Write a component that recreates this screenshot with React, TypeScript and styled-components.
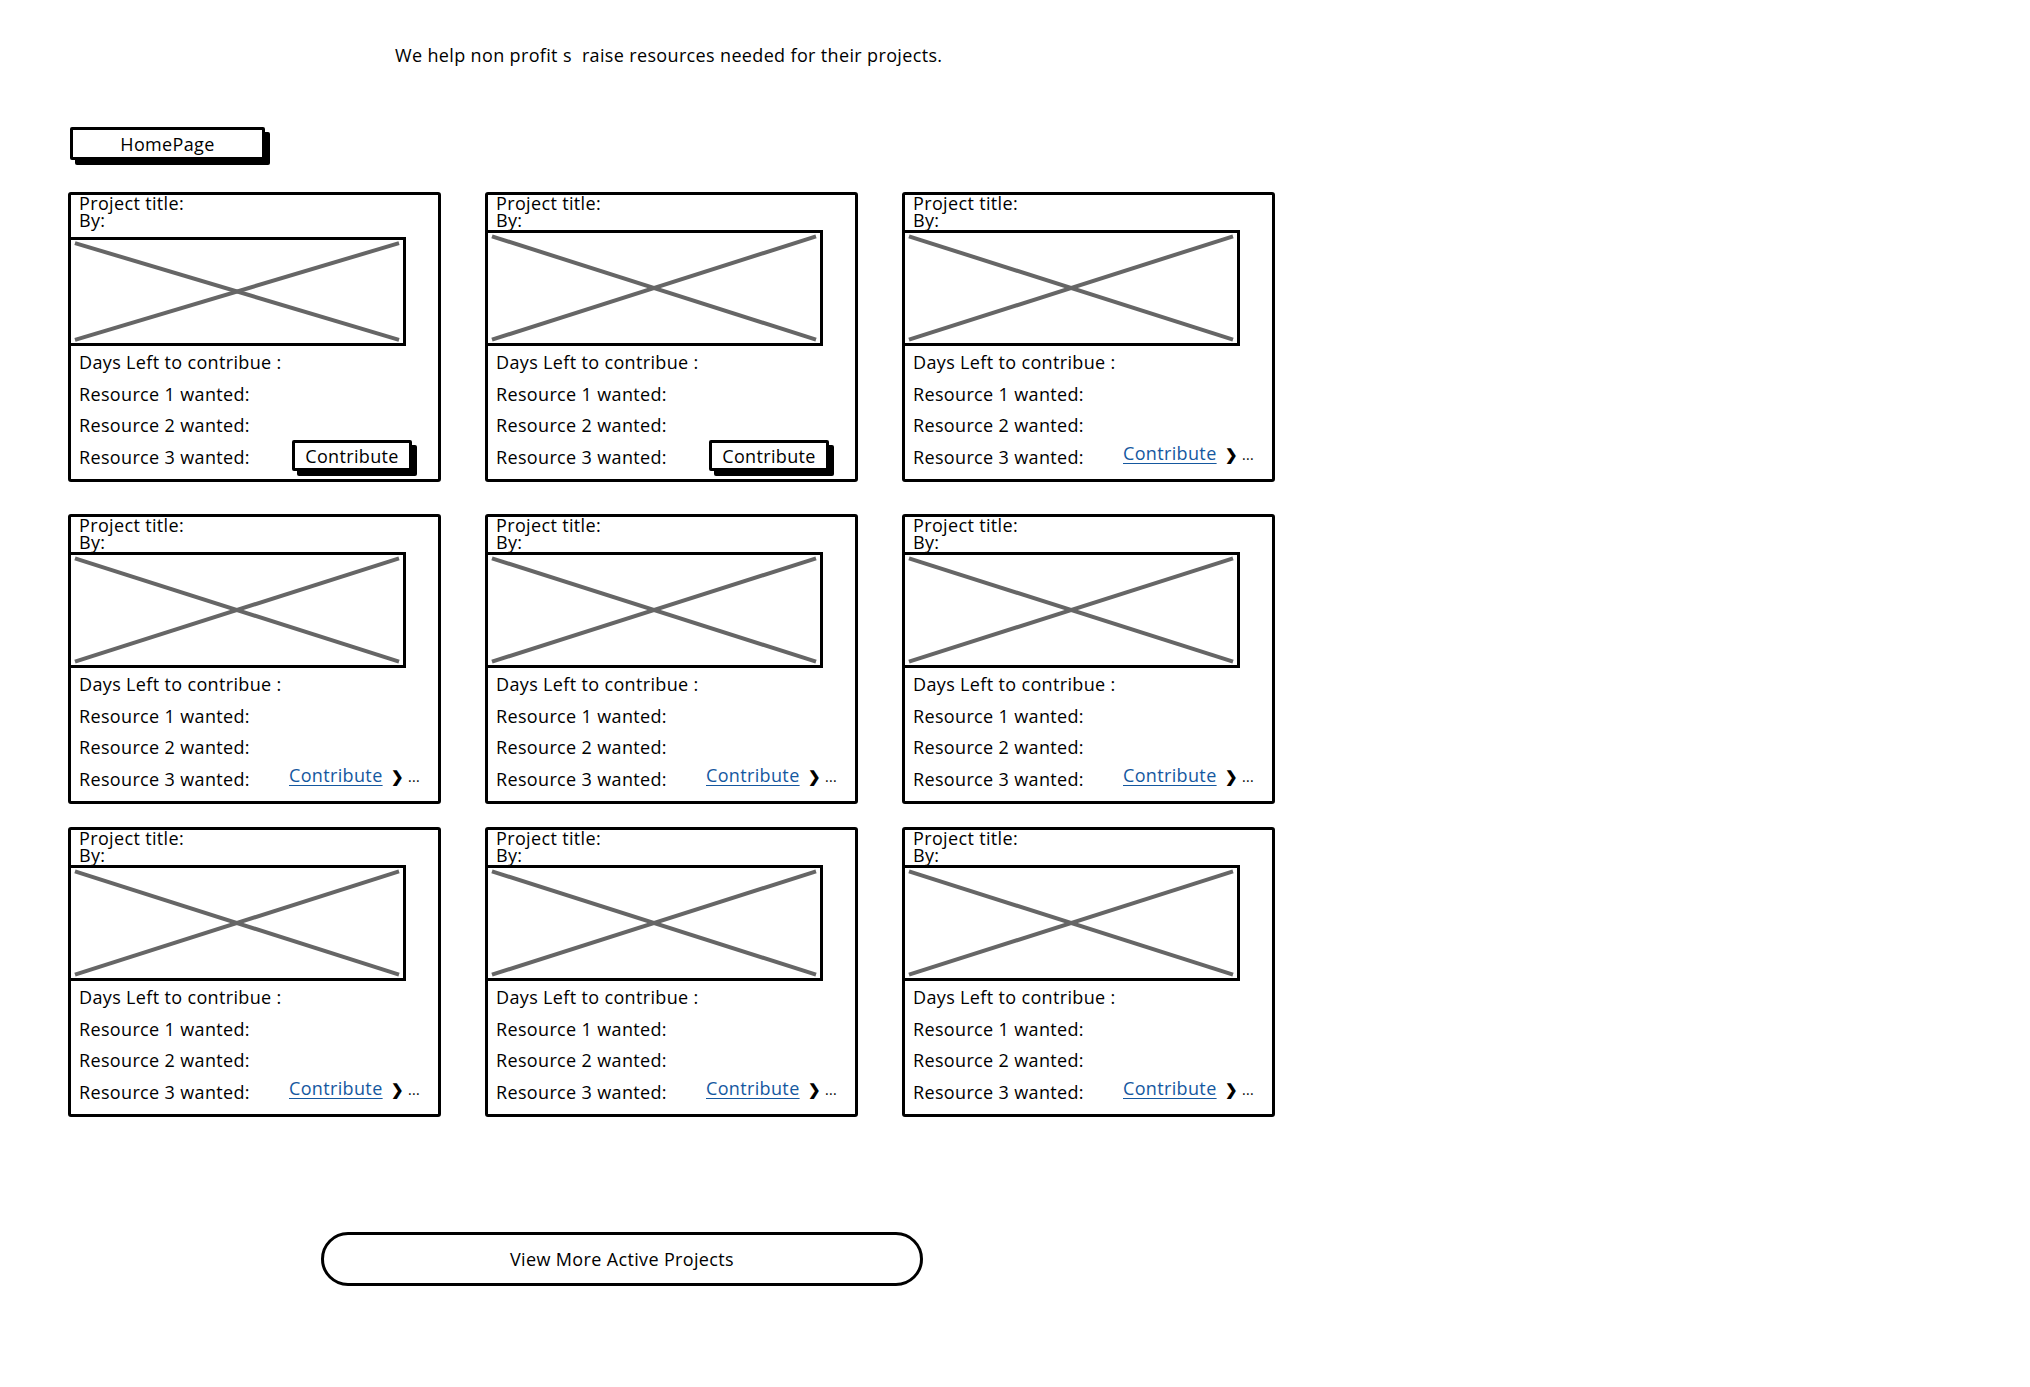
import styled, { createGlobalStyle } from "styled-components";

const GlobalStyle = createGlobalStyle`
  body {
    margin: 0;
    background: #fff;
    color: #000;
    font-family: "Open Sans", "Noto Sans", sans-serif;
    letter-spacing: 0.35px;
  }
`;

const Page = styled.div`
  padding: 43px 0 80px 68px;
  width: 1962px;
  min-height: 1263px;
`;

const Tagline = styled.div`
  margin-left: 327px;
  font-size: 18px;
  line-height: 24px;
`;

const HomeButton = styled.button`
  display: block;
  margin-top: 60px;
  margin-left: 2px;
  width: 195px;
  height: 33px;
  border: 3px solid #000;
  border-radius: 2px;
  background: #fff;
  box-shadow: 5px 5px 0 #000;
  font-family: inherit;
  font-size: 18px;
  line-height: 22px;
  letter-spacing: inherit;
  color: #000;
  padding: 0;
`;

const Grid = styled.div`
  display: grid;
  grid-template-columns: repeat(3, 373px);
  grid-template-rows: 322px 313px 290px;
  column-gap: 44px;
  align-items: start;
  margin-top: 32px;
`;

const Card = styled.div`
  border: 3px solid #000;
  border-radius: 3px;
  height: 290px;
  box-sizing: border-box;
  display: flex;
  flex-direction: column;
`;

const CardHead = styled.div<{ $tall?: boolean }>`
  padding-left: 8px;
  font-size: 18px;
  line-height: 17px;
  height: ${(p) => (p.$tall ? "42px" : "35px")};
`;

const Placeholder = styled.div<{ $tall?: boolean }>`
  margin-left: -3px;
  width: 338px;
  height: ${(p) => (p.$tall ? "109px" : "116px")};
  border: 3px solid #000;
  box-sizing: border-box;
  background: #fff;

  svg {
    display: block;
    width: 100%;
    height: 100%;
  }
`;

const Details = styled.div`
  padding-left: 8px;
  padding-top: 1px;
  font-size: 18px;
  line-height: 31.5px;
`;

const LastRow = styled.div`
  display: flex;
  align-items: center;
`;

const RowLabel = styled.span`
  width: 213px;
  flex: none;
`;

const ContributeButton = styled.button`
  box-sizing: content-box;
  width: 114px;
  height: 25px;
  margin-top: -3px;
  border: 3px solid #000;
  border-radius: 2px;
  background: #fff;
  box-shadow: 5px 5px 0 #000;
  font-family: inherit;
  font-size: 18px;
  line-height: 22px;
  letter-spacing: inherit;
  color: #000;
  padding: 0;
`;

const LinkWrap = styled.span`
  display: flex;
  align-items: baseline;
  margin-left: -3px;
  margin-top: -6px;
`;

const ContributeLink = styled.a`
  color: #15589f;
  text-decoration: underline;
  text-underline-offset: 3px;
  font-size: 18px;
  cursor: pointer;
`;

const Chevron = styled.span`
  font-size: 15px;
  font-weight: 900;
  margin-left: 8px;
`;

const Dots = styled.span`
  font-size: 14px;
  margin-left: 4px;
`;

const Footer = styled.div`
  margin-top: 115px;
  margin-left: 253px;
`;

const MoreButton = styled.button`
  width: 602px;
  height: 54px;
  border: 3px solid #000;
  border-radius: 27px;
  background: #fff;
  font-family: inherit;
  font-size: 18px;
  letter-spacing: inherit;
  color: #000;
  padding: 0;
`;

const CrossedImage = ({ tall }: { tall?: boolean }) => (
  <Placeholder $tall={tall}>
    <svg viewBox="0 0 100 100" preserveAspectRatio="none">
      <line
        x1="1.2"
        y1="3"
        x2="98.8"
        y2="97"
        stroke="#666"
        strokeWidth="4"
        vectorEffect="non-scaling-stroke"
      />
      <line
        x1="1.2"
        y1="97"
        x2="98.8"
        y2="3"
        stroke="#666"
        strokeWidth="4"
        vectorEffect="non-scaling-stroke"
      />
    </svg>
  </Placeholder>
);

type Project = { mode: "button" | "link"; tall?: boolean };

const projects: Project[] = [
  { mode: "button", tall: true },
  { mode: "button" },
  { mode: "link" },
  { mode: "link" },
  { mode: "link" },
  { mode: "link" },
  { mode: "link" },
  { mode: "link" },
  { mode: "link" },
];

const ProjectCard = ({ project }: { project: Project }) => (
  <Card>
    <CardHead $tall={project.tall}>
      Project title:
      <br />
      By:
    </CardHead>
    <CrossedImage tall={project.tall} />
    <Details>
      <div>Days Left to contribue :</div>
      <div>Resource 1 wanted:</div>
      <div>Resource 2 wanted:</div>
      <LastRow>
        <RowLabel>Resource 3 wanted:</RowLabel>
        {project.mode === "button" ? (
          <ContributeButton>Contribute</ContributeButton>
        ) : (
          <LinkWrap>
            <ContributeLink>Contribute</ContributeLink>
            <Chevron>❯</Chevron>
            <Dots>...</Dots>
          </LinkWrap>
        )}
      </LastRow>
    </Details>
  </Card>
);

const App = () => {
  return (
    <>
      <GlobalStyle />
      <Page>
        <Tagline>We help non profit s&nbsp; raise resources needed for their projects.</Tagline>
        <HomeButton>HomePage</HomeButton>
        <Grid>
          {projects.map((p, i) => (
            <ProjectCard project={p} key={"project_" + i} />
          ))}
        </Grid>
        <Footer>
          <MoreButton>View More Active Projects</MoreButton>
        </Footer>
      </Page>
    </>
  );
};

export default App;
